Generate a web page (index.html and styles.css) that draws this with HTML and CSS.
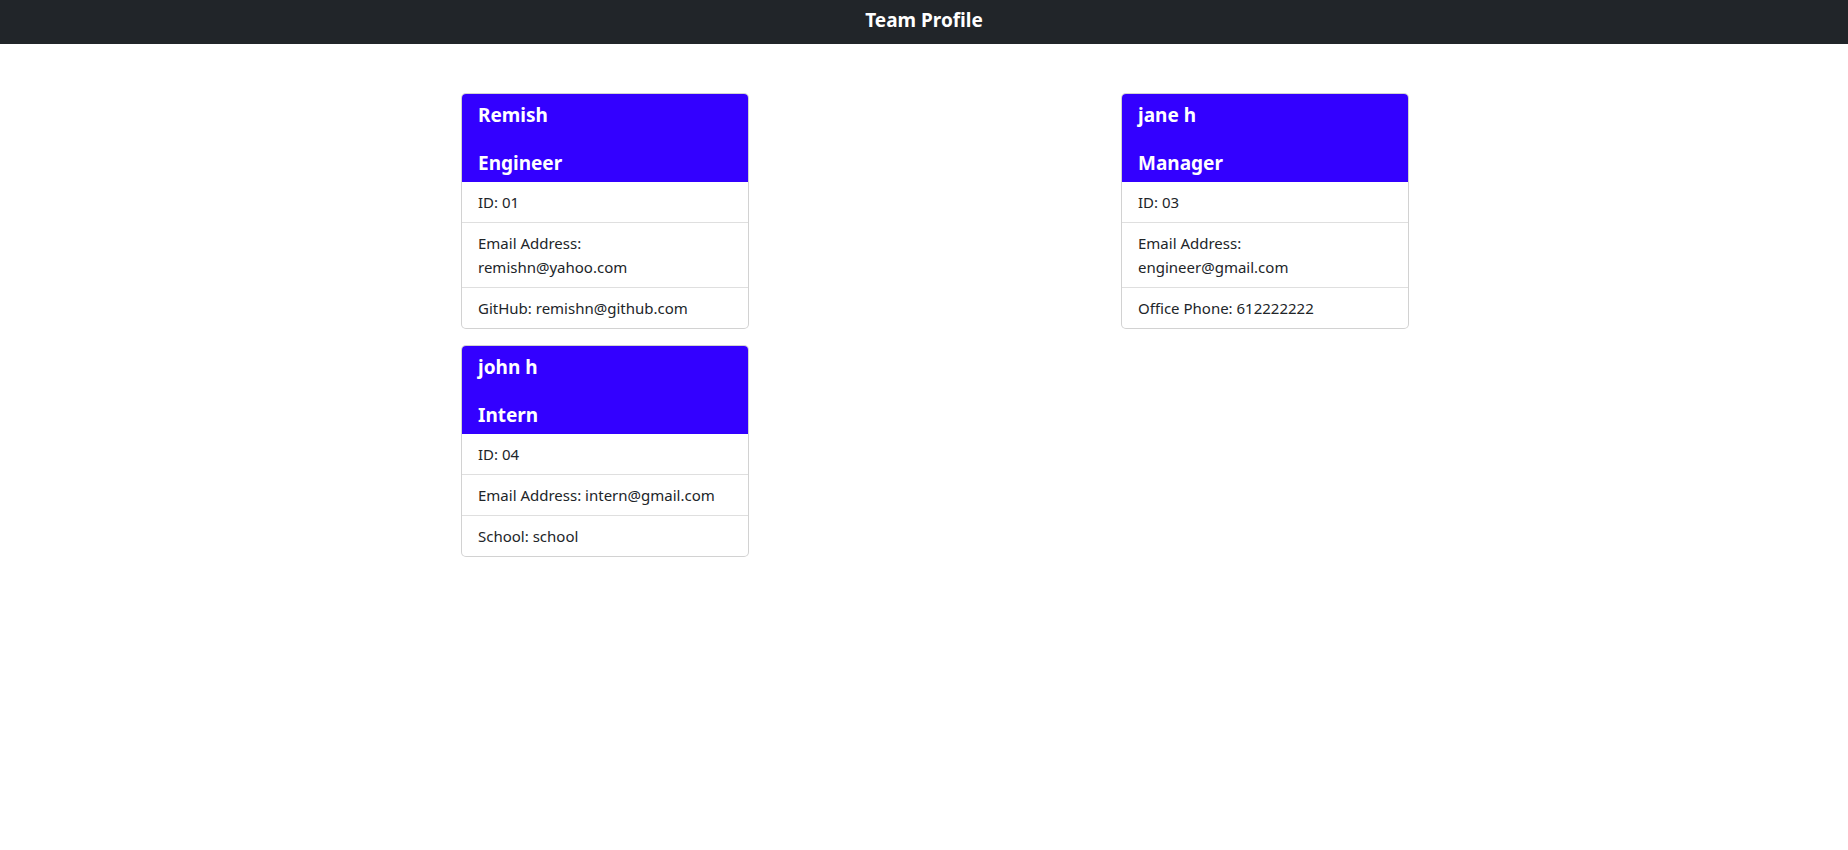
FILE: index.html
```html
<!DOCTYPE html>
<html lang="en">
<head>
<meta charset="utf-8">
<title>Team Profile</title>
<link rel="stylesheet" href="styles.css">
</head>
<body>
<header class="navbar"><span class="brand">Team Profile</span></header>
<main class="container">
  <section class="column">
    <article class="card">
      <div class="card-header"><h5>Remish</h5><h5>Engineer</h5></div>
      <ul class="list">
        <li>ID: 01</li>
        <li>Email Address: remishn@yahoo.com</li>
        <li>GitHub: remishn@github.com</li>
      </ul>
    </article>
    <article class="card">
      <div class="card-header"><h5>john h</h5><h5>Intern</h5></div>
      <ul class="list">
        <li>ID: 04</li>
        <li>Email Address: intern@gmail.com</li>
        <li>School: school</li>
      </ul>
    </article>
  </section>
  <section class="column">
    <article class="card">
      <div class="card-header"><h5>jane h</h5><h5>Manager</h5></div>
      <ul class="list">
        <li>ID: 03</li>
        <li>Email Address: engineer@gmail.com</li>
        <li>Office Phone: 612222222</li>
      </ul>
    </article>
  </section>
</main>
</body>
</html>
```
FILE: styles.css
```css
* { box-sizing: border-box; }
body {
  margin: 0;
  font-family: "Noto Sans", "Open Sans", sans-serif;
  font-size: 16px;
  line-height: 1.5;
  color: #212529;
  background: #fff;
}
.navbar {
  height: 44px;
  background: #212529;
  display: flex;
  justify-content: center;
  align-items: flex-start;
  padding-top: 5px;
}
.brand {
  color: #fff;
  font-weight: 700;
  font-size: 19px;
  line-height: 30px;
}
.container {
  width: 1296px;
  margin: 49px 0 0 288px;
  display: grid;
  grid-template-columns: 1fr 1fr;
  column-gap: 24px;
  align-items: start;
}
.column {
  display: flex;
  flex-direction: column;
  align-items: center;
  gap: 16px;
  padding-right: 2px;
}
.card {
  width: 288px;
  border: 1px solid rgba(0,0,0,.175);
  border-radius: 5px;
  overflow: hidden;
  background: #fff;
}
.card-header {
  background: #3300ff;
  color: #fff;
  padding: 9px 16px 7px 16px;
  display: flex;
  flex-direction: column;
  gap: 24px;
}
.card-header h5 {
  margin: 0;
  font-size: 19px;
  font-weight: 700;
  line-height: 24px;
}
.list {
  list-style: none;
  margin: 0;
  padding: 0;
}
.list li {
  padding: 8px 16px;
  font-size: 15px;
  line-height: 24px;
  border-top: 1px solid rgba(0,0,0,.125);
}
.list li:first-child { border-top: 0; }
```
